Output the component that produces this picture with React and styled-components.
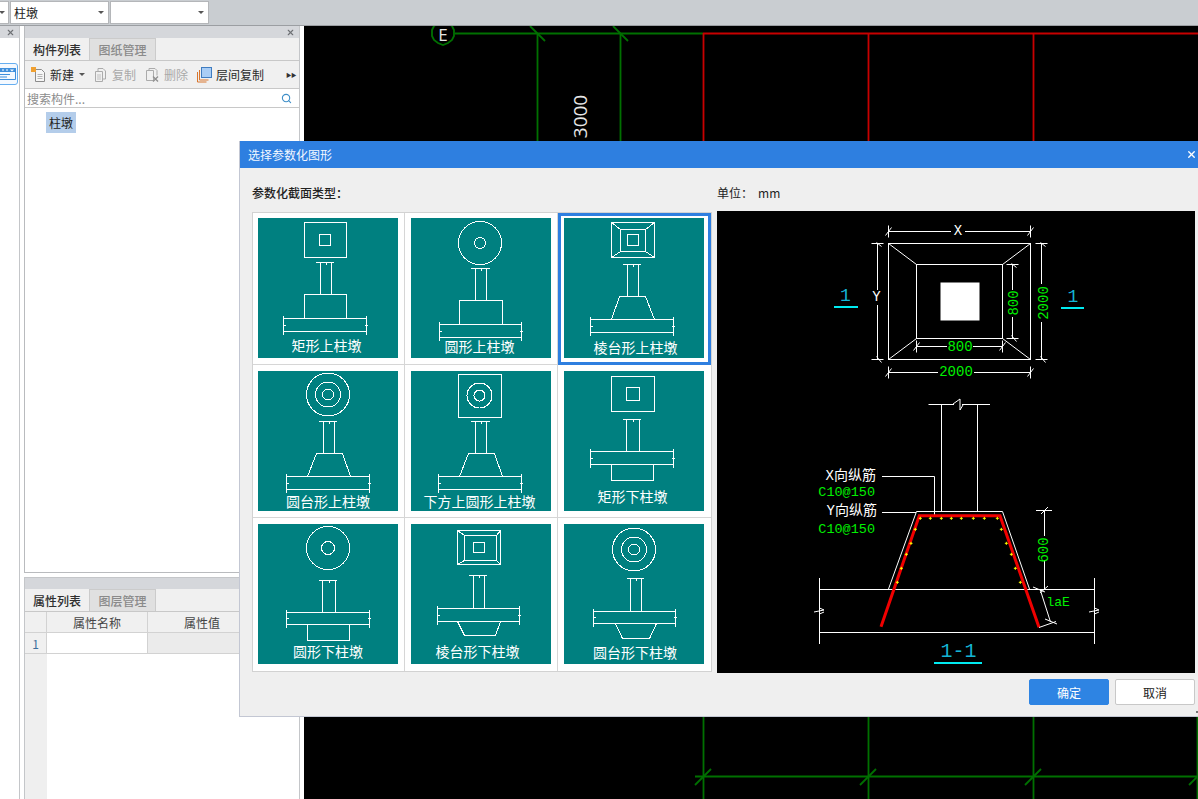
import React from "react";
import styled, { createGlobalStyle } from "styled-components";
import { Search, X } from "lucide-react";

const UI_FONT = '"Noto Sans CJK SC", "Liberation Sans", sans-serif';
const CAD_FONT = '"Liberation Mono", "Noto Sans CJK SC", monospace';

const box = (x1, y1, x2, y2) => (
  <rect x={x1} y={y1} width={x2 - x1} height={y2 - y1} />
);

const rings = (cx, cy, ...radii) =>
  radii.map((r) => <circle key={r} cx={cx} cy={cy} r={r} />);

const line = (x1, y1, x2, y2, key) => (
  <line key={key} x1={x1} y1={y1} x2={x2} y2={y2} />
);

const miters = (a, b) => (
  <>
    {line(a[0], a[1], b[0], b[1], "a")}
    {line(a[2], a[1], b[2], b[1], "b")}
    {line(a[0], a[3], b[0], b[3], "c")}
    {line(a[2], a[3], b[2], b[3], "d")}
  </>
);

const TILES = [
  {
    name: "矩形上柱墩",
    x: 68.5,
    y: 128,
    plan: (
      <>
        {box(46.5, 4.5, 88.5, 39.5)}
        {box(61.5, 16.5, 72.5, 27.5)}
      </>
    ),
    column: [58, 76, 62.5, 73.5, 44.5, 76.5],
    slab: [25.5, 108.5, 100.5, 113.5],
    base: "46.5,100.5 46.5,76.5 88.5,76.5 88.5,100.5",
  },
  {
    name: "圆形上柱墩",
    x: 68.5,
    y: 129,
    plan: rings(69, 25, 21.5, 5.5),
    column: [60, 79, 64.5, 75.5, 50.5, 82.5],
    slab: [28.5, 110.5, 106.5, 119.5],
    base: "48.5,106.5 48.5,82.5 91.5,82.5 91.5,106.5",
  },
  {
    name: "棱台形上柱墩",
    x: 71.5,
    y: 130,
    plan: (
      <>
        {box(47.5, 4.5, 90.5, 39.5)}
        {box(56.5, 11.5, 81.5, 33.5)}
        {box(63.5, 16.5, 74.5, 27.5)}
        {miters([47.5, 4.5, 90.5, 39.5], [56.5, 11.5, 81.5, 33.5])}
      </>
    ),
    column: [59, 77, 63.5, 74.5, 46.5, 78.5],
    slab: [26.5, 109.5, 101.5, 114.5],
    base: "47.5,101.5 55.5,78.5 81.5,78.5 90.5,101.5",
  },
  {
    name: "圆台形上柱墩",
    x: 70,
    y: 131,
    plan: rings(70, 23.5, 21.5, 12.5, 5.5),
    column: [61, 79, 65.5, 76.5, 50.5, 82.5],
    slab: [28.5, 111.5, 105.5, 118.5],
    base: "49.5,105.5 58.5,82.5 84.5,82.5 92.5,105.5",
  },
  {
    name: "下方上圆形上柱墩",
    x: 68.5,
    y: 131,
    plan: (
      <>
        {box(47.5, 3.5, 90.5, 46.5)}
        {rings(68.5, 24.5, 12.5, 5.5)}
      </>
    ),
    column: [60, 79, 64.5, 75.5, 50.5, 82.5],
    slab: [27.5, 110.5, 105.5, 118.5],
    base: "48.5,105.5 57.5,82.5 83.5,82.5 91.5,105.5",
  },
  {
    name: "矩形下柱墩",
    x: 68.5,
    y: 126,
    plan: (
      <>
        {box(47.5, 5.5, 90.5, 40.5)}
        {box(62.5, 16.5, 75.5, 29.5)}
      </>
    ),
    column: [59, 77, 62.5, 75.5, 48.5, 80.5],
    slab: [26.5, 109.5, 80.5, 93.5],
    base: "47.5,93.5 47.5,109.5 89.5,109.5 89.5,93.5",
  },
  {
    name: "圆形下柱墩",
    x: 70,
    y: 128,
    plan: rings(70, 24, 21.5, 6.5),
    column: [61, 79, 64.5, 77.5, 56.5, 88.5],
    slab: [28.5, 111.5, 88.5, 100.5],
    base: "49.5,100.5 49.5,116.5 91.5,116.5 91.5,100.5",
  },
  {
    name: "棱台形下柱墩",
    x: 66.5,
    y: 128,
    plan: (
      <>
        {box(46.5, 6.5, 89.5, 40.5)}
        {box(53.5, 11.5, 85.5, 36.5)}
        {box(62.5, 18.5, 73.5, 28.5)}
        {miters([46.5, 6.5, 89.5, 40.5], [53.5, 11.5, 85.5, 36.5])}
      </>
    ),
    column: [58, 76, 62.5, 73.5, 51.5, 84.5],
    slab: [26.5, 108.5, 84.5, 97.5],
    base: "46.5,97.5 53.5,111.5 84.5,111.5 89.5,97.5",
  },
  {
    name: "圆台形下柱墩",
    x: 71,
    y: 129,
    plan: rings(70, 25.5, 21.5, 12.5, 5.5),
    column: [63, 80, 66.5, 77.5, 54.5, 87.5],
    slab: [29.5, 111.5, 87.5, 99.5],
    base: "51.5,99.5 58.5,114.5 85.5,114.5 92.5,99.5",
  },
];

const REBAR_DOTS = [
  [361, 370], [391, 370], [424, 370], [454, 370], [484, 370], [520, 370],
  [553, 370], [592, 370], [346, 403], [333, 445], [319, 478], [304, 520],
  [292, 562], [604, 403], [619, 445], [634, 478], [646, 520], [661, 562],
];

const GlobalStyle = createGlobalStyle`
  html, body {
    margin: 0;
    padding: 0;
    background: #fff;
  }
  body {
    font-family: ${UI_FONT};
    font-size: 12px;
    color: #222;
  }
`;

const Page = styled.div`
  position: relative;
  width: 1198px;
  height: 799px;
  overflow: hidden;
  display: flex;
  flex-direction: column;
`;

const TopBar = styled.div`
  flex: none;
  height: 26px;
  display: flex;
  align-items: flex-start;
  gap: 1px;
  padding-top: 1px;
  box-sizing: border-box;
  background: #c9cdd1;
  border-bottom: 1px solid #9b9ea2;
`;

const Select = styled.div`
  width: ${(p) => p.$width}px;
  height: 23px;
  box-sizing: border-box;
  display: flex;
  align-items: center;
  justify-content: ${(p) => (p.$stub ? "flex-end" : "space-between")};
  padding: 0 ${(p) => (p.$stub ? 3 : 4)}px 0 ${(p) => (p.$stub ? 0 : 3)}px;
  background: #fff;
  border: 1px solid #b4b6b9;
  border-left-width: ${(p) => (p.$stub ? 0 : 1)}px;
  font-size: 12px;
  color: #222;
`;

const Caret = styled.span`
  width: 0;
  height: 0;
  margin-left: ${(p) => p.$gap || 0}px;
  border-left: 3px solid transparent;
  border-right: 3px solid transparent;
  border-top: 3px solid ${(p) => p.$color || "#555"};
`;

const Workspace = styled.div`
  flex: 1;
  min-height: 0;
  display: flex;
`;

const Strip = styled.div`
  flex: none;
  width: 20px;
  box-sizing: border-box;
  border-right: 1px solid #c4c6c9;
  background: #fff;
`;

const PanelHead = styled.div`
  height: ${(p) => p.$height || 12}px;
  flex: none;
  display: flex;
  align-items: center;
  justify-content: flex-end;
  padding-right: 4px;
  background: #d5d7db;
  color: #6e7074;
`;

const StripButton = styled.div`
  margin: 25px 0 0 -4px;
  width: 22px;
  height: 22px;
  box-sizing: border-box;
  display: flex;
  align-items: center;
  justify-content: center;
  border: 1px solid #66aef0;
  border-radius: 3px;
  background: #f4f9ff;
`;

const Panels = styled.div`
  flex: none;
  width: 276px;
  margin: 0 4px;
  display: flex;
  flex-direction: column;
`;

const ListPanel = styled.div`
  height: 547px;
  flex: none;
  box-sizing: border-box;
  display: flex;
  flex-direction: column;
  border: 1px solid #b9bbbe;
  border-top: 0;
  border-right-color: #c4c6c9;
`;

const PropertyPanel = styled.div`
  flex: 1;
  margin-top: 4px;
  box-sizing: border-box;
  display: flex;
  flex-direction: column;
  border: 1px solid #c4c6c9;
  border-bottom: 0;
`;

const TabRow = styled.div`
  height: 23px;
  flex: none;
  box-sizing: border-box;
  display: flex;
  background: #f0f0f0;
  border-bottom: 1px solid #c8c8c8;
`;

const Tab = styled.div`
  width: ${(p) => (p.$active ? 64 : 65)}px;
  display: flex;
  align-items: center;
  justify-content: center;
  font-weight: 500;
  color: ${(p) => (p.$active ? "#2e2e2e" : "#8a8a8a")};
  background: ${(p) => (p.$active ? "#f0f0f0" : "#e0e0e0")};
  border-left: ${(p) => (p.$active ? "0" : "1px solid #cbcbcb")};
  border-right: ${(p) => (p.$active ? "0" : "1px solid #cbcbcb")};
  border-top: ${(p) => (p.$active ? "0" : "1px solid #cbcbcb")};
`;

const ActionBar = styled.div`
  height: 28px;
  flex: none;
  box-sizing: border-box;
  display: flex;
  align-items: center;
  padding-left: 6px;
  background: #f0f0f0;
  border-bottom: 1px solid #c8c8c8;
`;

const Action = styled.div`
  display: flex;
  align-items: center;
  margin-right: ${(p) => p.$gap}px;
  color: ${(p) => (p.$disabled ? "#a9a9a9" : "#2a2a2a")};
`;

const ActionIcon = styled.svg`
  width: ${(p) => p.$size || 15}px;
  height: 16px;
  margin-right: ${(p) => p.$gap}px;
  flex: none;
`;

const More = styled.div`
  margin-left: auto;
  margin-right: 3px;
  font-size: 5.5px;
  letter-spacing: -0.5px;
  color: #333;
`;

const SearchRow = styled.div`
  height: 19px;
  flex: none;
  box-sizing: border-box;
  display: flex;
  align-items: center;
  justify-content: space-between;
  padding: 0 7px 0 2px;
  background: #fff;
  border-bottom: 1px solid #c8c8c8;
  color: #8c8c8c;
`;

const Tree = styled.div`
  flex: 1;
  background: #fff;
  padding: 4px 0 0 21px;
`;

const TreeItem = styled.span`
  display: inline-block;
  height: 21px;
  line-height: 21px;
  padding: 0 3px;
  background: #b4cdea;
  color: #222;
`;

const GridRow = styled.div`
  height: ${(p) => p.$height}px;
  flex: none;
  display: grid;
  grid-template-columns: 22px 101px 108px;
  box-sizing: border-box;
  border-bottom: 1px solid #d2d2d2;
`;

const HeadCell = styled.div`
  display: flex;
  align-items: center;
  justify-content: center;
  background: ${(p) => p.$bg || "#f0f0f0"};
  border-right: ${(p) => (p.$last ? "0" : "1px solid #d2d2d2")};
  color: ${(p) => p.$color || "#444"};
`;

const EmptyTable = styled.div`
  flex: 1;
  display: grid;
  grid-template-columns: 22px 1fr;
  background: #fff;
`;

const RowGutter = styled.div`
  background: #efefef;
`;

const Canvas = styled.div`
  flex: 1;
  min-width: 0;
  background: #000;
`;

const CadSvg = styled.svg`
  display: block;
  width: 100%;
  height: 100%;
`;

const GridLines = styled.g`
  stroke: ${(p) => p.$color};
  stroke-width: 1.8;
  fill: none;
`;

const AxisMark = styled.text`
  fill: #e6e6e6;
  font-family: "Open Sans", sans-serif;
  font-size: ${(p) => p.$size}px;
  text-anchor: middle;
  dominant-baseline: central;
`;

const Dialog = styled.div`
  position: absolute;
  left: 239px;
  top: 141px;
  width: 959px;
  height: 576px;
  box-sizing: border-box;
  display: flex;
  flex-direction: column;
  background: #efefef;
  border-left: 1px solid #c3c7d3;
  border-bottom: 1px solid #c3c7d3;
`;

const TitleBar = styled.div`
  height: 27px;
  flex: none;
  display: flex;
  align-items: center;
  justify-content: space-between;
  padding: 0 1px 0 8px;
  background: #2e7fe0;
  color: #f2f7ff;
`;

const LabelRow = styled.div`
  height: 43px;
  flex: none;
  display: flex;
  align-items: center;
  padding: 5px 0 0 12px;
  box-sizing: border-box;
  color: #222;
`;

const SectionLabel = styled.div`
  width: ${(p) => p.$width}px;
  font-weight: ${(p) => p.$weight || 400};
`;

const Unit = styled.span`
  margin-left: 5px;
`;

const Content = styled.div`
  display: flex;
  height: 463px;
  flex: none;
  padding-left: 12px;
  gap: 5px;
`;

const TileGrid = styled.div`
  width: 460px;
  height: 460px;
  margin-top: 1px;
  box-sizing: border-box;
  display: grid;
  grid-template-columns: 152px 153px 153px;
  grid-template-rows: 152px 153px 153px;
  border: 1px solid #d2d2d2;
  background: #fff;
`;

const Cell = styled.div`
  box-sizing: border-box;
  padding: ${(p) => (p.$row ? 6 : 5)}px 0 0 ${(p) => (p.$col ? 6 : 5)}px;
  background: #fff;
  border-right: ${(p) => (p.$col < 2 ? "1px solid #d6d6d6" : "0")};
  border-bottom: ${(p) => (p.$row < 2 ? "1px solid #d6d6d6" : "0")};
  outline: ${(p) => (p.$selected ? "3px solid #2e7fe0" : "none")};
  outline-offset: -3px;
`;

const Tile = styled.div`
  position: relative;
  width: 140px;
  height: 140px;
  background: #008080;
`;

const Drawing = styled.svg`
  display: block;
  fill: none;
  stroke: #fff;
  stroke-width: 1;
`;

const Caption = styled.span`
  position: absolute;
  left: ${(p) => p.$x}px;
  top: ${(p) => p.$y}px;
  transform: translate(-50%, calc(-50% - 1px));
  white-space: nowrap;
  font-size: 14px;
  line-height: 16px;
  color: #fff;
`;

const Preview = styled.div`
  width: 478px;
  height: 462px;
  background: #000;
`;

const CadText = styled.text`
  fill: ${(p) => p.$color || "#fff"};
  stroke: none;
  font-family: ${CAD_FONT};
  font-size: ${(p) => p.$size || 14}px;
  text-anchor: ${(p) => p.$anchor || "middle"};
  dominant-baseline: central;
`;

const TextGap = styled.rect`
  fill: #000;
  stroke: none;
`;

const Footer = styled.div`
  flex: 1;
  display: flex;
  justify-content: flex-end;
  gap: 6px;
  padding: 5px 3px 0 0;
  box-sizing: border-box;
`;

const Button = styled.div`
  width: 80px;
  height: 26px;
  box-sizing: border-box;
  display: flex;
  align-items: center;
  justify-content: center;
  border-radius: 2px;
  background: ${(p) => (p.$primary ? "#2e84e3" : "#fff")};
  color: ${(p) => (p.$primary ? "#fff" : "#222")};
  border: 1px solid ${(p) => (p.$primary ? "#2e84e3" : "#c8c8c8")};
`;

const Grip = styled.span`
  position: absolute;
  right: 0;
  bottom: 3px;
  width: 2px;
  height: 2px;
  background: #777;
`;

const ThumbTile = ({ tile }) => {
  const [capL, capR, colL, colR, top, bottom] = tile.column;
  const [slabL, slabR, slabT, slabB] = tile.slab;
  const mid = (colL + colR) / 2;
  const tickY = (slabT + slabB) / 2;
  return (
    <Tile>
      <Drawing width="140" height="140" viewBox="0 0 140 140" shapeRendering="crispEdges">
        {tile.plan}
        {line(capL, top, capR, top)}
        {line(mid, top - 1, mid, top + 2)}
        {line(colL, top, colL, bottom)}
        {line(colR, top, colR, bottom)}
        <polygon points={tile.base} />
        {line(slabL, slabT, slabR, slabT)}
        {line(slabL, slabB, slabR, slabB)}
        {line(slabL, slabT - 3, slabL, slabB + 3)}
        {line(slabR, slabT - 3, slabR, slabB + 3)}
        {line(slabL - 1, tickY, slabL + 2, tickY)}
        {line(slabR - 2, tickY, slabR + 1, tickY)}
      </Drawing>
      <Caption $x={tile.x} $y={tile.y}>
        {tile.name}
      </Caption>
    </Tile>
  );
};

const DimH = ({ x1, x2, y }) => (
  <>
    {line(x1, y, x2, y)}
    {line(x1, y - 6, x1, y + 6)}
    {line(x2, y - 6, x2, y + 6)}
    {line(x1 - 3, y + 4, x1 + 3, y - 4)}
    {line(x2 - 3, y + 4, x2 + 3, y - 4)}
  </>
);

const DimV = ({ x, y1, y2 }) => (
  <>
    {line(x, y1, x, y2)}
    {line(x - 6, y1, x + 6, y1)}
    {line(x - 6, y2, x + 6, y2)}
    {line(x - 1, y1 - 1, x + 4, y1 + 3)}
    {line(x - 1, y2 - 3, x + 4, y2 + 3)}
  </>
);

const PlanView = () => (
  <>
    {box(888.5, 243.5, 1030.5, 359.5)}
    {box(916.5, 264.5, 1002.5, 338.5)}
    <rect x="941" y="283" width="38" height="37" fill="#fff" />
    {line(888.5, 243.5, 916.5, 264.5)}
    {line(1030.5, 243.5, 1002.5, 264.5)}
    {line(888.5, 359.5, 916.5, 338.5)}
    {line(1030.5, 359.5, 1002.5, 338.5)}

    <DimH x1={888.5} x2={1030.5} y={231.5} />
    <TextGap x="951" y="224" width="14" height="15" />
    <CadText x="958" y="231">X</CadText>

    <DimV x={877.5} y1={243.5} y2={359.5} />
    <TextGap x="870" y="290" width="14" height="15" />
    <CadText x="876.5" y="297">Y</CadText>

    <DimV x={1041.5} y1={243.5} y2={359.5} />
    <TextGap x="1035" y="284" width="14" height="38" />
    <CadText $color="#00f000" transform="rotate(-90 1044 303)" x="1044" y="303">2000</CadText>

    <DimV x={1012.5} y1={264.5} y2={338.5} />
    <TextGap x="1006" y="290" width="14" height="27" />
    <CadText $color="#00f000" transform="rotate(-90 1014 303)" x="1014" y="303">800</CadText>

    <DimH x1={916.5} x2={1002.5} y={346.5} />
    <TextGap x="947" y="340" width="26" height="14" />
    <CadText $color="#00f000" x="960" y="347">800</CadText>

    <DimH x1={888.5} x2={1030.5} y={372.5} />
    <TextGap x="938" y="365" width="36" height="14" />
    <CadText $color="#00f000" x="956" y="372">2000</CadText>

    <CadText $color="#14b4d4" $size={18} x="845.5" y="296">1</CadText>
    <rect x="834" y="306" width="24" height="2" fill="#00eaf0" stroke="none" />
    <CadText $color="#14b4d4" $size={18} x="1073" y="297">1</CadText>
    <rect x="1061" y="307" width="23" height="2" fill="#00eaf0" stroke="none" />
  </>
);

const SectionView = () => (
  <>
    {line(928.5, 404.5, 990, 404.5)}
    {line(941.5, 404.5, 941.5, 511.5)}
    {line(977.5, 404.5, 977.5, 511.5)}
    <TextGap x="954" y="402" width="8" height="5" />
    <polyline points="953,404 960,399 960,410 963,405" />

    <polyline points="888.5,589 916.5,511.5 1002.5,511.5 1029.5,589" />

    {line(819.5, 589.5, 1094.5, 589.5)}
    {line(819.5, 632.5, 1094.5, 632.5)}
    {line(819.5, 578, 819.5, 644)}
    {line(1094.5, 578, 1094.5, 644)}
    <polyline points="814,612 824,610 819.5,608 819.5,614 824,612" />
    <polyline points="1089,612 1099,610 1094.5,608 1094.5,614 1099,612" />

    <polyline points="882,476.5 934.5,476.5 934.5,515" />
    {line(882, 512.5, 916, 512.5)}

    <polyline
      points="881,626.7 919.3,515.7 1000,515.7 1039,627.3"
      stroke="#f00000"
      strokeWidth="3"
    />
    {REBAR_DOTS.map(([zx, zy]) => {
      const x = 800 + zx / 3;
      const y = 395 + zy / 3;
      return (
        <path
          key={`${zx}-${zy}`}
          d={`M${x - 1.5} ${y}H${x + 1.5}M${x} ${y - 1.5}V${y + 1.5}`}
          stroke="#ffff00"
        />
      );
    })}

    <CadText $anchor="end" x="876" y="476">X向纵筋</CadText>
    <CadText $anchor="end" $color="#00f000" x="875" y="492.5" $size={13.5}>C10@150</CadText>
    <CadText $anchor="end" x="877" y="510.5">Y向纵筋</CadText>
    <CadText $anchor="end" $color="#00f000" x="875" y="529" $size={13.5}>C10@150</CadText>

    {line(1044.5, 510.5, 1044.5, 589)}
    {line(1036, 510.5, 1052, 510.5)}
    {line(1041, 514, 1048, 507)}
    {line(1036, 589.5, 1048, 589.5)}
    {line(1040, 593, 1048, 586)}
    <TextGap x="1038" y="536" width="13" height="24" />
    <CadText $color="#00f000" transform="rotate(-90 1044 550)" x="1044" y="550">600</CadText>

    {line(1040, 589, 1050.5, 622)}
    {line(1039, 627.5, 1056, 621.5)}
    {line(1045, 619, 1057, 624)}
    {line(1033, 587, 1045, 592)}
    <CadText $anchor="start" $color="#00f000" x="1046.5" y="602.5" $size={13}>laE</CadText>

    <CadText $color="#14b4d4" $size={20} x="958.5" y="651">1-1</CadText>
    <rect x="934" y="662" width="48" height="2" fill="#00eaf0" stroke="none" />
  </>
);

const CanvasGrid = () => (
  <CadSvg viewBox="304 26 894 773" preserveAspectRatio="none">
    <GridLines $color="#007000">
      <polygon points="432,30 434,26 438,23 443,22 448,23 452,26 454,30 454,36 452,40 448,43 443,45 438,43 434,40 432,36" />
      {line(455, 33.5, 703, 33.5)}
      {line(537.5, 33, 537.5, 150)}
      {line(620.5, 33, 620.5, 150)}
      {line(530, 26, 545, 41)}
      {line(613, 26, 628, 41)}
      {[703, 868, 1033, 1197].map((x) => (
        <React.Fragment key={x}>
          {line(x + 0.5, 710, x + 0.5, 799)}
          {line(x - 8, 785, x + 8, 769)}
        </React.Fragment>
      ))}
      {line(695, 776.5, 1198, 776.5)}
    </GridLines>
    <GridLines $color="#c80000">
      {line(703, 33.5, 1198, 33.5)}
      {line(703.5, 33, 703.5, 150)}
      {line(868.5, 33, 868.5, 150)}
      {line(1033.5, 33, 1033.5, 150)}
    </GridLines>
    <AxisMark $size={17} x="443" y="34">E</AxisMark>
    <AxisMark $size={19} x="579.5" y="116.5" transform="rotate(-90 579.5 116.5)">3000</AxisMark>
  </CadSvg>
);

const App = () => (
  <Page>
    <GlobalStyle />
    <TopBar>
      <Select $width={9} $stub>
        <Caret />
      </Select>
      <Select $width={99}>
        柱墩
        <Caret />
      </Select>
      <Select $width={99}>
        <span />
        <Caret />
      </Select>
    </TopBar>
    <Workspace>
      <Strip>
        <PanelHead>
          <X size={9} strokeWidth={3} />
        </PanelHead>
        <StripButton>
          <svg width="18" height="12" viewBox="0 0 18 12">
            <path d="M0 0h18v4H0z" fill="#3f8fdc" />
            <path d="M4 1.5h2v1H4zM8 1.5h2v1H8z" fill="#fff" />
            <path d="M12 1.5h4l-2 2z" fill="#fff" />
            <path d="M1 6.5h11M1 9h8" stroke="#3f8fdc" />
            <path d="M0 .5h17.5v11H0" fill="none" stroke="#3f8fdc" />
          </svg>
        </StripButton>
      </Strip>
      <Panels>
        <ListPanel>
          <PanelHead>
            <X size={9} strokeWidth={3} />
          </PanelHead>
          <TabRow>
            <Tab $active>构件列表</Tab>
            <Tab>图纸管理</Tab>
          </TabRow>
          <ActionBar>
            <Action $gap={10}>
              <ActionIcon $gap={4} viewBox="0 0 15 16">
                <path d="M4.5 2.5h6l3 3v9h-9z" fill="#f6f6f6" stroke="#8c8c8c" />
                <path d="M6.5 7.5h5M6.5 9.5h5M6.5 11.5h5" stroke="#b5b5b5" />
                <rect x="0" y="0" width="5" height="5" fill="#f0a030" />
              </ActionIcon>
              新建
              <Caret $gap={5} $color="#555" />
            </Action>
            <Action $gap={10} $disabled>
              <ActionIcon $size={11} $gap={6} viewBox="0 0 11 16">
                <path d="M.5 4.5h7v10h-7zM3 4V1.5h5l2.5 2.5v8H8" fill="none" stroke="#ababab" />
                <path d="M2 8h4M2 10h4M2 12h4" stroke="#c0c0c0" />
              </ActionIcon>
              复制
            </Action>
            <Action $gap={9} $disabled>
              <ActionIcon $size={13} $gap={5} viewBox="0 0 13 16">
                <path d="M3 3.5V1.5h6l2 2v5M.5 3.5h7v10h-7z" fill="none" stroke="#ababab" />
                <path d="M7 9.5l5 5M12 9.5l-5 5" stroke="#8f8f8f" strokeWidth="1.4" />
              </ActionIcon>
              删除
            </Action>
            <Action $gap={0}>
              <ActionIcon $gap={4} viewBox="0 0 15 16">
                <path d="M.5 5v10h9" fill="none" stroke="#d9762e" />
                <path d="M2.5 3v10h9" fill="none" stroke="#d9762e" />
                <rect x="4.5" y=".5" width="10" height="10" fill="#a9cdf5" stroke="#3f7cc0" />
              </ActionIcon>
              层间复制
            </Action>
            <More>▶▶</More>
          </ActionBar>
          <SearchRow>
            搜索构件...
            <Search size={11} strokeWidth={2.4} color="#3f8fc8" />
          </SearchRow>
          <Tree>
            <TreeItem>柱墩</TreeItem>
          </Tree>
        </ListPanel>
        <PropertyPanel>
          <PanelHead $height={11} />
          <TabRow>
            <Tab $active>属性列表</Tab>
            <Tab>图层管理</Tab>
          </TabRow>
          <GridRow $height={21}>
            <HeadCell />
            <HeadCell>属性名称</HeadCell>
            <HeadCell $last>属性值</HeadCell>
          </GridRow>
          <GridRow $height={21}>
            <HeadCell $color="#3c6f9c">1</HeadCell>
            <HeadCell $bg="#fff" />
            <HeadCell $last $bg="#ebebeb" />
          </GridRow>
          <EmptyTable>
            <RowGutter />
          </EmptyTable>
        </PropertyPanel>
      </Panels>
      <Canvas>
        <CanvasGrid />
      </Canvas>
    </Workspace>

    <Dialog>
      <TitleBar>
        选择参数化图形
        <X size={11} strokeWidth={3} color="#fff" />
      </TitleBar>
      <LabelRow>
        <SectionLabel $width={465} $weight={500}>参数化截面类型：</SectionLabel>
        <SectionLabel $width={200}>
          单位：<Unit>mm</Unit>
        </SectionLabel>
      </LabelRow>
      <Content>
        <TileGrid>
          {TILES.map((tile, i) => (
            <Cell key={tile.name} $col={i % 3} $row={Math.floor(i / 3)} $selected={i === 2}>
              <ThumbTile tile={tile} />
            </Cell>
          ))}
        </TileGrid>
        <Preview>
          <Drawing width="478" height="462" viewBox="717 211 478 462">
            <PlanView />
            <SectionView />
          </Drawing>
        </Preview>
      </Content>
      <Footer>
        <Button $primary>确定</Button>
        <Button>取消</Button>
      </Footer>
      <Grip />
    </Dialog>
  </Page>
);

export default App;
